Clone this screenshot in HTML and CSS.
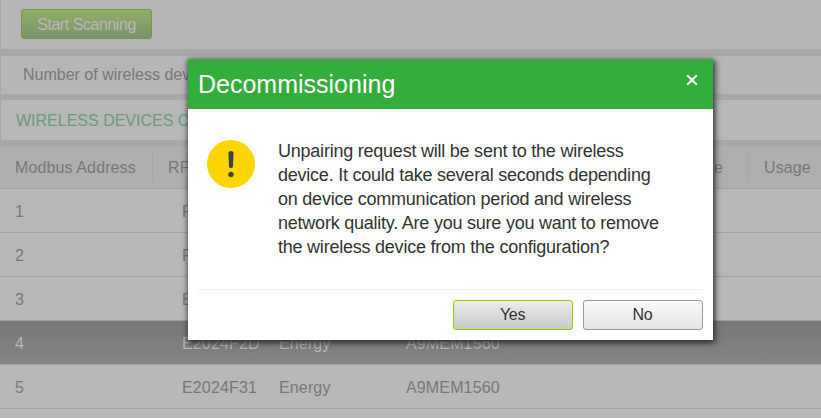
FILE: index.html
```html
<!doctype html>
<html lang="en">
  <head>
    <meta charset="utf-8">
    <title>Wireless Devices</title>
    <link rel="stylesheet" href="styles.css">
  </head>
  <body>
    <div class="page">
      <div class="panel scan-panel">
        <button class="scan-btn">Start Scanning</button>
      </div>
      <div class="panel count-panel">Number of wireless devices</div>
      <div class="panel title-panel">WIRELESS DEVICES CONFIGURATION</div>

      <div class="table">
        <div class="table-head">
          <span>Modbus Address</span>
          <span>RF-Id</span>
          <span class="name">Name</span>
          <span>Usage</span>
        </div>
        <div class="row"><span>1</span><span>FF</span></div>
        <div class="row"><span>2</span><span>FF</span></div>
        <div class="row"><span>3</span><span>E2</span></div>
        <div class="row selected"><span>4</span><span>E2024F2D</span><span>Energy</span><span>A9MEM1560</span></div>
        <div class="row"><span>5</span><span>E2024F31</span><span>Energy</span><span>A9MEM1560</span></div>
        <div class="row"></div>
      </div>
    </div>

    <div class="dialog">
      <div class="dialog-header">
        <span>Decommissioning</span>
        <svg class="close" width="12" height="12" viewBox="0 0 12 12">
          <path d="M1.2 1.2 10.8 10.8M10.8 1.2 1.2 10.8" stroke="#fff" stroke-width="2" />
        </svg>
      </div>
      <div class="dialog-body">
        <svg class="warning" width="48" height="48" viewBox="0 0 48 48">
          <circle cx="24" cy="24" r="24" fill="#ffd500" />
          <path d="M21.4 12.7Q21.4 11 24 11T26.6 12.7L26 26.5Q25.9 28 24 28T22 26.5Z" fill="#434343" />
          <circle cx="24" cy="34.5" r="2.7" fill="#434343" />
        </svg>
        <div class="message">
          Unpairing request will be sent to the wireless<br>
          device. It could take several seconds depending<br>
          on device communication period and wireless<br>
          network quality. Are you sure you want to remove<br>
          the wireless device from the configuration?
        </div>
      </div>
      <div class="dialog-footer">
        <button class="btn yes">Yes</button>
        <button class="btn">No</button>
      </div>
    </div>
  </body>
</html>
```

FILE: styles.css
```css
* {
  box-sizing: border-box;
}

body {
  margin: 0;
  height: 418px;
  overflow: hidden;
  background: #a8a8a8;
  color: #777;
  font-family: "Liberation Sans", Arial, sans-serif;
  font-size: 16px;
}

.page {
  display: flex;
  flex-direction: column;
  gap: 6px;
}

.panel {
  display: flex;
  align-items: center;
  background: #b6b6b6;
  border-left: 1px solid #a8a8a8;
  white-space: nowrap;
}

.scan-panel {
  height: 49px;
  padding-left: 20px;
  margin-bottom: 1px;
}

.scan-btn {
  width: 131px;
  height: 30px;
  margin-bottom: 1px;
  padding: 1px 0 0;
  border: 1px solid #7b925d;
  border-radius: 3px;
  background: linear-gradient(#91ad66, #7c936b);
  color: #b8b8b8;
  font: inherit;
  letter-spacing: -0.45px;
}

.count-panel {
  height: 38px;
  padding-left: 22px;
}

.title-panel {
  height: 40px;
  padding: 2px 0 0 15px;
  background: #b8b8b8;
  color: #6b9a7c;
}

.table-head {
  display: grid;
  grid-template-columns: 152px 500px 96px 73px;
  align-items: center;
  height: 43px;
  background: #afafaf;
  border-bottom: 1px solid #a3a3a3;
}

.table-head span {
  height: 30px;
  padding-left: 15px;
  line-height: 32px;
  letter-spacing: 0.12px;
  border-left: 1px solid #a7a7a7;
}

.table-head span:first-child,
.table-head .name {
  border-left: none;
}

.table-head .name {
  padding-right: 25px;
  text-align: right;
}

.row {
  display: grid;
  grid-template-columns: 167px 97px 127px 1fr;
  align-items: center;
  height: 44px;
  padding: 2px 0 0 15px;
  background: #b8b8b8;
  border-bottom: 1px solid #a3a3a3;
  letter-spacing: 0.14px;
}

.row:last-child {
  height: 9px;
  border-bottom: none;
}

.selected {
  background: linear-gradient(#777, #858586);
  color: #b8b8b8;
}

.dialog {
  position: absolute;
  top: 59px;
  left: 188px;
  width: 525px;
  height: 281px;
  background: #fff;
  box-shadow: 1px 2px 6px 1px #2c2c2c;
}

.dialog-header {
  display: flex;
  justify-content: space-between;
  height: 50px;
  padding: 0 15px 0 10px;
  background: #33ad3b;
  color: #fff;
  font-size: 25px;
  line-height: 51px;
}

.close {
  margin-top: 15px;
}

.dialog-body {
  display: flex;
  gap: 22px;
  height: 181px;
  margin: 0 10px;
  padding: 30px 0 0 10px;
  border-bottom: 1px solid #ededed;
}

.message {
  padding-left: 1px;
  color: #333;
  font-size: 18px;
  line-height: 24px;
  letter-spacing: -0.23px;
  white-space: nowrap;
}

.warning {
  flex: none;
  margin-left: -1px;
  margin-top: 1px;
}

.dialog-footer {
  display: flex;
  justify-content: flex-end;
  gap: 10px;
  padding: 10px 10px 0;
}

.btn {
  width: 120px;
  height: 30px;
  padding: 0 1px 0 0;
  border: 1px solid #999;
  border-radius: 3px;
  background: linear-gradient(#fafafa, #e4e4e4);
  color: #333;
  font: inherit;
  letter-spacing: -0.3px;
}

.yes {
  border-color: #87d300;
  background: linear-gradient(#ececec, #c9c9c9);
}
```
